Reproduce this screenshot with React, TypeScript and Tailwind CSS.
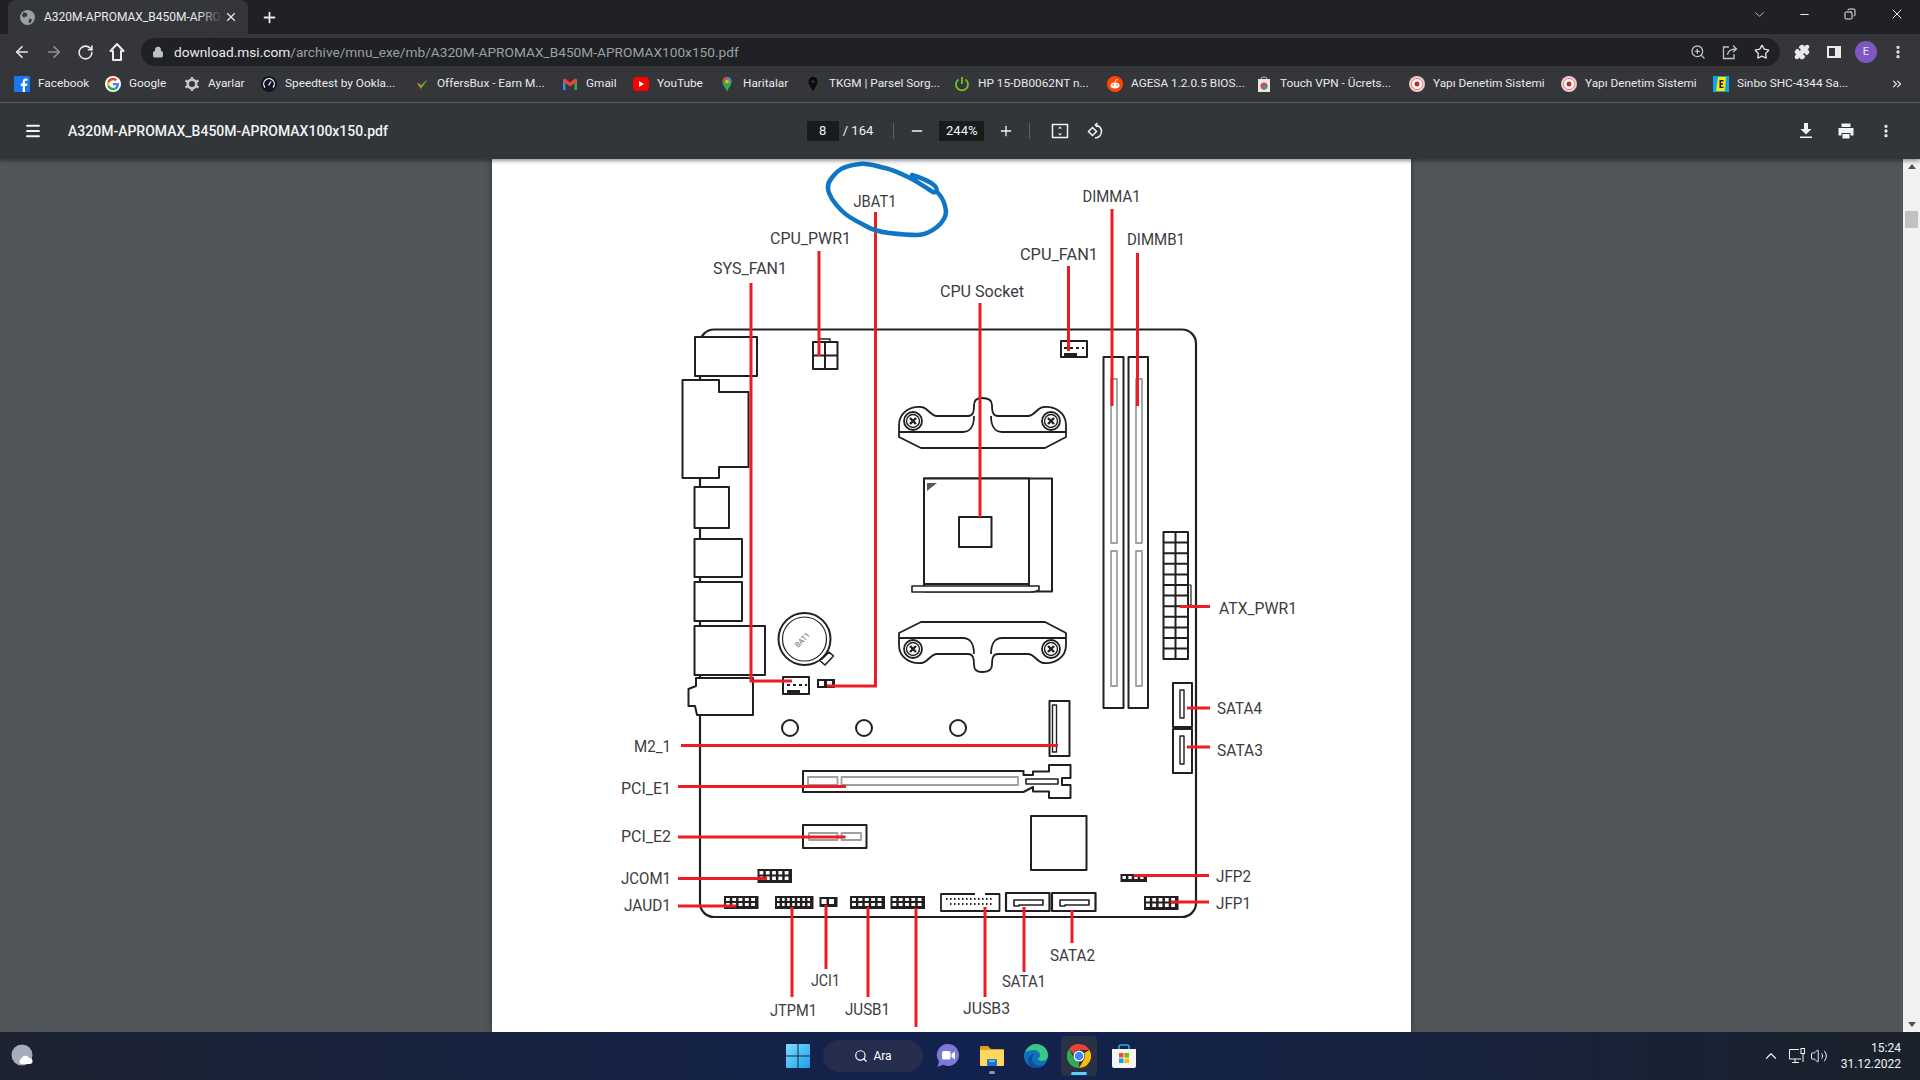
import React from "react";
import {
  ArrowLeft, ArrowRight, RotateCw, Lock, ZoomIn, Star, Puzzle, MoreVertical,
  Menu, Minus, Plus, X, ChevronDown, ChevronUp, ChevronsRight, Search, Copy, Volume2,
} from "lucide-react";

const INK = "#231f20";
const RED = "#ed1c24";

// labels: text, left x, baseline y, width
const LABELS: [string, number, number, number][] = [
  ["JBAT1", 853.5, 207, 43],
  ["DIMMA1", 1082.5, 202, 58],
  ["DIMMB1", 1127, 245, 58],
  ["CPU_PWR1", 770, 244, 81],
  ["SYS_FAN1", 713, 274, 74],
  ["CPU_FAN1", 1020, 260, 78],
  ["CPU Socket", 940, 297, 84],
  ["ATX_PWR1", 1219, 614, 78],
  ["SATA4", 1217, 714, 45],
  ["SATA3", 1217, 755.5, 46],
  ["M2_1", 634, 751.5, 37],
  ["PCI_E1", 621, 794, 50],
  ["PCI_E2", 621, 842, 50],
  ["JCOM1", 621, 884, 50],
  ["JAUD1", 624, 911, 47],
  ["JFP2", 1216, 881.5, 35],
  ["JFP1", 1216, 909, 35],
  ["JTPM1", 770, 1016, 47],
  ["JCI1", 811, 986, 29],
  ["JUSB1", 845, 1015, 45],
  ["JUSB3", 963, 1014, 47],
  ["SATA1", 1002, 987, 44],
  ["SATA2", 1050, 961, 45],
];

// red leader lines
const LEADERS = [
  "M875.5 212V686H827",
  "M751 283V681H792",
  "M819 251V356",
  "M980 303V517",
  "M1068.5 266V351",
  "M1112 209V406",
  "M1137.5 253V406",
  "M1180 606.5H1210",
  "M1187 708H1210",
  "M1187 747H1210",
  "M681 745.500H1058",
  "M678 786.500H846",
  "M678 837H845.500",
  "M678 878.500H767",
  "M678 906H736",
  "M1133.500 875.500H1209",
  "M1170.500 902H1209",
  "M792 907V997",
  "M826 905V969",
  "M868 907V997",
  "M916 908V1027",
  "M985 907V997",
  "M1024 907V972",
  "M1072 910V943",
];

const Pins = ({ x, y, w, h, cols, rows }: { x: number; y: number; w: number; h: number; cols: number; rows: number }) => (
  <g>
    <rect x={x} y={y} width={w} height={h} fill={INK} />
    {Array.from({ length: cols * rows }).map((_, i) => {
      const c = i % cols;
      const r = Math.floor(i / cols);
      return (
        <rect
          key={i}
          x={x + 2 + (c * (w - 3)) / cols}
          y={y + 2 + (r * (h - 3)) / rows}
          width={(w - 3) / cols - 2.5}
          height={(h - 3) / rows - 2}
          fill="#fff"
        />
      );
    })}
  </g>
);

const Bracket = () => (
  <g fill="#fff" stroke={INK} strokeWidth="1.8" strokeLinejoin="round">
    <path d="M899 437V425C899 412 911 406 921 407C928 407 930 416 937 416H968C973 416 974 412 974 405C974 400 977 398 982 398C988 398 992 400 992 405C992 412 993 416 998 416H1028C1035 416 1037 407 1044 407C1054 406 1066 412 1066 425V437L1045 448H921Z" />
    <path d="M899 432H963C970 432 974 426 974 416M1066 432H1002C995 432 991 426 991 416" fill="none" />
    {[913, 1051].map((cx) => (
      <g key={cx}>
        <circle cx={cx} cy={421} r="9" />
        <circle cx={cx} cy={421} r="6.500" strokeWidth="1.400" />
        <path d={`M${cx - 3} ${418}L${cx + 3} ${424}M${cx + 3} ${418}L${cx - 3} ${424}`} strokeWidth="2.400" />
      </g>
    ))}
  </g>
);

const Board = () => (
  <svg viewBox="492 159 919 873" className="block w-full h-full">
    <g fill="#fff" stroke={INK} strokeWidth="2" strokeLinejoin="round">
      <rect x="700" y="329.500" width="496" height="587.500" rx="14" strokeWidth="2.200" />
      {/* back panel */}
      <rect x="695" y="337" width="62" height="39" />
      <path d="M682.500 380H719V392H748.500V467H719V478H682.500Z" />
      <rect x="694.500" y="487" width="34.500" height="41" />
      <rect x="694.500" y="539" width="47.500" height="38" />
      <rect x="694.500" y="582" width="47.500" height="39" />
      <rect x="694.500" y="626" width="70.500" height="49" />
      <path d="M696 678H753V715H697L695 706H688.500V689L696 686Z" />
      {/* cpu power */}
      <path d="M819 342V339H830V342" fill="none" strokeWidth="1.400" />
      <rect x="813" y="342" width="24.500" height="27" />
      <path d="M825 342V369M813 355.500H837.500" fill="none" />
      {/* cpu fan */}
      <rect x="1061" y="341" width="26" height="16" />
      <rect x="1064" y="353" width="13" height="3" fill={INK} stroke="none" />
      <path d="M1064 348H1084" stroke={INK} strokeDasharray="3 3" fill="none" />
      {/* dimm */}
      <rect x="1103.500" y="357" width="20" height="351" />
      <rect x="1128.500" y="357" width="19.500" height="351" />
      <g stroke="#9d9fa2" fill="none" strokeWidth="1.800">
        <rect x="1111" y="379" width="6" height="164" />
        <rect x="1111" y="551" width="6" height="135" />
        <rect x="1136" y="379" width="6" height="164" />
        <rect x="1136" y="551" width="6" height="135" />
      </g>
      {/* socket */}
      <rect x="924" y="478.500" width="128" height="113" />
      <path d="M1029 478.500V586" fill="none" />
      <path d="M924 478.500H1029V584H924Z" />
      <path d="M912 586H1039V590Q1036 592 1030 592H912Z" strokeWidth="1.600" />
      <rect x="959" y="517" width="32.500" height="30" />
      <path d="M927 483H937L927 491Z" fill="#58595b" stroke="none" />
      <Bracket />
      <g transform="matrix(1 0 0 -1 0 1070)">
        <Bracket />
      </g>
      {/* battery */}
      <path d="M822 659L829 652L833.500 656L825 665L819 660Z" strokeWidth="1.600" />
      <circle cx="804.500" cy="639" r="26" />
      <circle cx="804.500" cy="639" r="22" strokeWidth="1.200" />
      {/* sys fan, jbat */}
      <rect x="783" y="677" width="26" height="17" />
      <rect x="787" y="690" width="13" height="3" fill={INK} stroke="none" />
      <path d="M787 685H807" strokeDasharray="3 3" fill="none" />
      <rect x="817" y="679" width="18" height="9" fill={INK} stroke="none" />
      <rect x="819" y="681" width="5" height="5" stroke="none" />
      <rect x="827" y="681" width="5" height="5" stroke="none" />
      {/* holes */}
      <circle cx="790" cy="728" r="8" />
      <circle cx="864" cy="728" r="8" />
      <circle cx="958" cy="728" r="8" />
      {/* m2 */}
      <rect x="1049.500" y="701" width="20" height="55" />
      <rect x="1052.500" y="705" width="4" height="47" strokeWidth="1.400" />
      {/* pci_e1 */}
      <path d="M803 771H1023.500V775H1033V771.500H1049V765H1070.500V778H1062V785H1070.500V798H1049V791.500H1033V787L1023.500 792H803Z" />
      <rect x="1026" y="779" width="32" height="5" strokeWidth="1.600" />
      <g stroke="#9d9fa2" strokeWidth="1.800" fill="none">
        <rect x="808" y="777" width="29.500" height="8" />
        <rect x="841.500" y="777" width="176.500" height="8" />
      </g>
      {/* pci_e2 */}
      <rect x="803" y="825" width="63.500" height="23" />
      <g stroke="#9d9fa2" strokeWidth="1.800" fill="none">
        <rect x="809" y="833" width="28.500" height="7" />
        <rect x="841.500" y="833" width="19.500" height="7" />
      </g>
      {/* chip */}
      <rect x="1031" y="816" width="55.500" height="54" />
      {/* jusb3 */}
      <path d="M975 894H941V911H999.500V894H985" strokeWidth="1.800" />
      <path d="M946 899H994M950 904H994" stroke={INK} strokeDasharray="1.500 2.500" fill="none" strokeWidth="1.800" />
      {/* sata1 / sata2 */}
      <rect x="1006" y="893" width="43.500" height="18" strokeWidth="2.200" />
      <path d="M1014 906V900H1043V905H1019V906Z" strokeWidth="1.600" />
      <rect x="1052" y="893" width="43.500" height="18" strokeWidth="2.200" />
      <path d="M1060 906V900H1089V905H1065V906Z" strokeWidth="1.600" />
      {/* atx */}
      <rect x="1188" y="585" width="3" height="20" strokeWidth="1.200" />
      <rect x="1163.500" y="532" width="24.500" height="127" />
      <path
        d="M1175.500 532V659M1163.500 542.600H1188M1163.500 553.200H1188M1163.500 563.800H1188M1163.500 574.400H1188M1163.500 585H1188M1163.500 595.600H1188M1163.500 606.200H1188M1163.500 616.800H1188M1163.500 627.400H1188M1163.500 638H1188M1163.500 648.600H1188"
        fill="none"
      />
      {/* sata4 / sata3 */}
      <rect x="1173" y="683" width="19" height="44" />
      <path d="M1180 690H1184V718H1180Z" strokeWidth="1.400" />
      <rect x="1173" y="729" width="19" height="44" />
      <path d="M1180 736H1184V764H1180Z" strokeWidth="1.400" />
    </g>
    <Pins x={757.500} y={869} w={34.500} h={14} cols={5} rows={2} />
    <Pins x={724} y={896} w={34.500} h={13} cols={5} rows={2} />
    <Pins x={775} y={896} w={38.500} h={13} cols={7} rows={2} />
    <Pins x={819.500} y={897} w={18} h={10} cols={2} rows={1} />
    <Pins x={850} y={896} w={35} h={13} cols={5} rows={2} />
    <Pins x={890.500} y={896} w={34.500} h={13} cols={5} rows={2} />
    <Pins x={1120.500} y={874} w={26.500} h={8} cols={4} rows={1} />
    <Pins x={1144} y={896} w={34.500} h={14} cols={5} rows={2} />
    <text x="0" y="0" transform="translate(798 648) rotate(-45)" fontFamily="Roboto, sans-serif" fontSize="7.500" fill="#6d6e71">
      BAT1
    </text>

    <path d={LEADERS.join("")} fill="none" stroke={RED} strokeWidth="3" />

    {/* pen circle over JBAT1 */}
    <path
      d="M912 175C922 178 930 181 935 186C938 190 937 193 933 192C926 188 918 182 910 178C902 174 894 170 885 168C876 166 868 163 860 164C850 165 842 167 837 172C831 178 827 183 828 189C829 197 835 204 842 211C848 217 856 221 864 225C872 230 880 232 889 233C898 234 908 235 917 235C925 235 932 231 937 227C943 222 946 216 946 211C945 204 942 197 938 193"
      fill="none"
      stroke="#0f76c6"
      strokeWidth="4.500"
      strokeLinecap="round"
      strokeLinejoin="round"
    />

    {LABELS.map(([t, x, y, w]) => (
      <text
        key={t}
        x={x}
        y={y}
        textLength={w}
        lengthAdjust="spacingAndGlyphs"
        fontFamily="Roboto, sans-serif"
        fontSize="16.500"
        fill="#3c3c3e"
      >
        {t}
      </text>
    ))}
  </svg>
);

/* ---- favicons ---- */
const Fb = () => (
  <svg width="16" height="16" viewBox="0 0 16 16"><rect width="16" height="16" rx="1" fill="#1877f2" /><path d="M11 16V10h2l.4-2.500H11V6c0-.8.3-1.300 1.300-1.300h1.200V2.500h-1.900C10 2.500 8.700 3.700 8.700 5.800v1.700H6.800V10h1.900v6z" fill="#fff" /></svg>
);
const GoogleIcon = () => (
  <svg width="16" height="16" viewBox="0 0 24 24">
    <circle cx="12" cy="12" r="12" fill="#fff" />
    <path fill="#4285F4" d="M21 12.300c0-.7-.1-1.300-.2-1.900H12v3.600h5.100a4.400 4.400 0 0 1-1.900 2.900v2.400h3C20 17.600 21 15.200 21 12.300z" />
    <path fill="#34A853" d="M12 21.500c2.600 0 4.700-.9 6.200-2.300l-3-2.400c-.8.600-1.900.9-3.200.9-2.500 0-4.600-1.700-5.300-3.900H3.600v2.500a9.500 9.500 0 0 0 8.400 5.200z" />
    <path fill="#FBBC05" d="M6.700 13.800a5.800 5.800 0 0 1 0-3.600V7.700H3.600a9.500 9.500 0 0 0 0 8.600z" />
    <path fill="#EA4335" d="M12 6.300c1.400 0 2.600.5 3.600 1.400l2.700-2.700A9.500 9.500 0 0 0 3.600 7.700l3.100 2.500c.7-2.200 2.800-3.900 5.300-3.900z" />
  </svg>
);
const Gear = () => (
  <svg width="16" height="16" viewBox="0 0 16 16"><circle cx="8" cy="8" r="4.300" fill="none" stroke="#c4c7c5" strokeWidth="2.600" /><path d="M8 1v3M8 12v3M1.500 4.500l2.600 1.500M11.900 10l2.600 1.500M1.500 11.500L4.100 10M11.900 6l2.600-1.500" stroke="#c4c7c5" strokeWidth="2.400" /></svg>
);
const Speed = () => (
  <svg width="16" height="16" viewBox="0 0 16 16"><circle cx="8" cy="8" r="8" fill="#141526" /><path d="M4 11.500a5.300 5.300 0 1 1 8 0M7.500 9.500L10 5.500" fill="none" stroke="#fff" strokeWidth="1.200" /></svg>
);
const Offers = () => (
  <svg width="16" height="16" viewBox="0 0 16 16"><path d="M14 4a7 7 0 1 0 1 5" fill="none" stroke="#3a3a32" strokeWidth="1.600" /><path d="M4 7l4 6 7-10-7 6z" fill="#6aa035" /><path d="M4 7l3 1 1 5z" fill="#e8792b" /></svg>
);
const Gmail = () => (
  <svg width="16" height="16" viewBox="0 0 16 16"><path d="M1 14V3.500L3.500 5v9z" fill="#4285f4" /><path d="M15 14V3.500L12.500 5v9z" fill="#34a853" /><path d="M1 3.500l2-1 5 4 5-4 2 1v2L8 10.500 1 5.500z" fill="#ea4335" /></svg>
);
const Yt = () => (
  <svg width="16" height="16" viewBox="0 0 16 16"><rect y="1" width="16" height="14" rx="4" fill="#f00" /><path d="M6 5l5 3-5 3z" fill="#fff" /></svg>
);
const Maps = () => (
  <svg width="16" height="16" viewBox="0 0 16 16"><path d="M8 16C7 12 3.500 10 3.500 5.500a4.500 4.500 0 0 1 9 0C12.500 10 9 12 8 16z" fill="#34a853" /><path d="M3.500 5.500a4.500 4.500 0 0 1 4.500-4.500v3z" fill="#ea4335" /><path d="M8 1a4.500 4.500 0 0 1 4.500 4.500H9z" fill="#4285f4" /><circle cx="8" cy="5.500" r="1.800" fill="#fbbc05" /></svg>
);
const Pin = () => (
  <svg width="16" height="16" viewBox="0 0 16 16"><path d="M8 16C7 12 3.500 9.500 3.500 5.500a4.500 4.500 0 0 1 9 0C12.500 9.500 9 12 8 16z" fill="#0b0b0b" /><circle cx="8" cy="5.500" r="1.600" fill="#35363a" /></svg>
);
const Hp = () => (
  <svg width="16" height="16" viewBox="0 0 16 16"><path d="M4.500 3.500a6 6 0 1 0 7 0" fill="none" stroke="#6fbf2c" strokeWidth="1.800" /><path d="M8 1v7" stroke="#6fbf2c" strokeWidth="1.800" /></svg>
);
const Reddit = () => (
  <svg width="16" height="16" viewBox="0 0 16 16"><circle cx="8" cy="8" r="8" fill="#ff4500" /><ellipse cx="8" cy="9.500" rx="4.500" ry="3" fill="#fff" /><circle cx="6.200" cy="9" r=".8" fill="#ff4500" /><circle cx="9.800" cy="9" r=".8" fill="#ff4500" /><path d="M8 6.500L9 3.500l2 .5" fill="none" stroke="#fff" strokeWidth=".8" /></svg>
);
const StoreFav = () => (
  <svg width="16" height="16" viewBox="0 0 16 16"><rect x="2" y="3" width="12" height="13" fill="#e8e8e8" /><path d="M5 3a3 2 0 0 1 6 0" fill="none" stroke="#bbb" /><circle cx="8" cy="10" r="3.500" fill="#ea4335" /><path d="M8 10l3.500 0a3.500 3.500 0 0 1-5.500 3z" fill="#34a853" /><circle cx="8" cy="10" r="1.400" fill="#4285f4" /></svg>
);
const Seal = () => (
  <svg width="16" height="16" viewBox="0 0 16 16"><circle cx="8" cy="8" r="8" fill="#f0c8c8" /><circle cx="8" cy="8" r="5.500" fill="#fff" stroke="#d88" /><circle cx="8" cy="8" r="2.500" fill="#c8232c" /></svg>
);
const Sinbo = () => (
  <svg width="16" height="16" viewBox="0 0 16 16"><rect width="16" height="16" fill="#09a7e8" /><path d="M5 1h8l-1 14H3z" fill="#ffe600" /><path d="M6.500 4h4v1.500H8v1.800h2v1.500H8v1.900h2.500V12h-4z" fill="#1a1a1a" /></svg>
);

const BOOKMARKS: [string, React.ReactNode, string][] = [
  ["Facebook", <Fb />, "w-[91px]"],
  ["Google", <GoogleIcon />, "w-[79px]"],
  ["Ayarlar", <Gear />, "w-[77px]"],
  ["Speedtest by Ookla...", <Speed />, "w-[152px]"],
  ["OffersBux - Earn M...", <Offers />, "w-[149px]"],
  ["Gmail", <Gmail />, "w-[71px]"],
  ["YouTube", <Yt />, "w-[86px]"],
  ["Haritalar", <Maps />, "w-[86px]"],
  ["TKGM | Parsel Sorg...", <Pin />, "w-[149px]"],
  ["HP 15-DB0062NT n...", <Hp />, "w-[153px]"],
  ["AGESA 1.2.0.5 BIOS...", <Reddit />, "w-[149px]"],
  ["Touch VPN - Ücrets...", <StoreFav />, "w-[153px]"],
  ["Yapı Denetim Sistemi", <Seal />, "w-[152px]"],
  ["Yapı Denetim Sistemi", <Seal />, "w-[152px]"],
  ["Sinbo SHC-4344 Sa...", <Sinbo />, "w-[150px]"],
];

/* ---- taskbar icons ---- */
const WinLogo = () => (
  <svg width="24" height="24" viewBox="0 0 24 24">
    <defs>
      <linearGradient id="win" x1="0" y1="0" x2="1" y2="1"><stop offset="0" stopColor="#7fdcff" /><stop offset="1" stopColor="#18a0ee" /></linearGradient>
    </defs>
    <path fill="url(#win)" d="M0 1a1 1 0 0 1 1-1h10.500v11.500H0zM12.500 0H23a1 1 0 0 1 1 1v10.500H12.500zM0 12.500h11.500V24H1a1 1 0 0 1-1-1zM12.500 12.500H24V23a1 1 0 0 1-1 1H12.500z" />
  </svg>
);
const ChatIcon = () => (
  <svg width="24" height="26" viewBox="0 0 24 26">
    <path d="M12 1a11 11 0 1 1-5 20.800L1.500 24 3 18.500A11 11 0 0 1 12 1z" fill="#7b78d8" />
    <rect x="6" y="8" width="8.500" height="8.500" rx="1.500" fill="#fff" />
    <path d="M15.500 11l3.500-2.500v8L15.500 14z" fill="#fff" />
  </svg>
);
const FolderIcon = () => (
  <svg width="24" height="22" viewBox="0 0 24 22">
    <path d="M0 2a1 1 0 0 1 1-1h7l3 3h12a1 1 0 0 1 1 1v3H0z" fill="#d9a21f" />
    <path d="M0 5h24v15a1 1 0 0 1-1 1H1a1 1 0 0 1-1-1z" fill="#ffd75e" />
    <rect x="7" y="14" width="10" height="7" rx="1" fill="#1b78c9" />
    <rect x="9" y="15" width="6" height="2" fill="#5bb4ee" />
  </svg>
);
const EdgeIcon = () => (
  <svg width="24" height="24" viewBox="0 0 24 24">
    <circle cx="12" cy="12" r="12" fill="#1170b8" />
    <path d="M1 9C3 3 8 0 12 0c7 0 12 5 12 11 0 4-3 6-6 6-2 0-4-1-4-2 0-1 2-1 2-4 0-3-3-5-6-5-4 0-8 1-9 3z" fill="#3bc78a" />
    <path d="M14 24c-5 1-10-2-10-8 0-3 3-6 7-6-2 1-3 3-3 5 0 5 5 8 11 6-1 1-3 3-5 3z" fill="#0d4f9a" />
  </svg>
);
const ChromeIcon = () => (
  <svg width="24" height="24" viewBox="0 0 24 24">
    <path d="M12 0a12 12 0 0 1 10.400 6H12a6 6 0 0 0-5.700 4.100L2.100 5A12 12 0 0 1 12 0z" fill="#ea4335" />
    <path d="M22.400 6A12 12 0 0 1 12 24l5.200-9A6 6 0 0 0 17.200 9z" fill="#fbbc05" />
    <path d="M12 24A12 12 0 0 1 2.100 5l5.100 9.500A6 6 0 0 0 12 18z" fill="#34a853" />
    <circle cx="12" cy="12" r="5.500" fill="#fff" />
    <circle cx="12" cy="12" r="4.300" fill="#4285f4" />
  </svg>
);
const StoreIcon = () => (
  <svg width="24" height="24" viewBox="0 0 24 24">
    <path d="M7 6V3a2 2 0 0 1 2-2h6a2 2 0 0 1 2 2v3" fill="none" stroke="#29a8e8" strokeWidth="1.600" />
    <path d="M0 5h24v17a2 2 0 0 1-2 2H2a2 2 0 0 1-2-2z" fill="#f5f5f5" />
    <rect x="7" y="9" width="4.500" height="4.500" fill="#f25022" />
    <rect x="12.500" y="9" width="4.500" height="4.500" fill="#7fba00" />
    <rect x="7" y="14.500" width="4.500" height="4.500" fill="#00a4ef" />
    <rect x="12.500" y="14.500" width="4.500" height="4.500" fill="#ffb900" />
  </svg>
);

/* ---- toolbar icons ---- */
const HomeIcon = () => (
  <svg width="18" height="20" viewBox="0 0 18 20" fill="none" stroke="#e8eaed" strokeWidth="2">
    <path d="M9 2L2.500 9H5v9h8V9h2.500Z" strokeLinejoin="round" />
  </svg>
);
const ShareIcon = () => (
  <svg width="16" height="16" viewBox="0 0 16 16" fill="none" stroke="#bdc1c6" strokeWidth="1.300">
    <path d="M7 3H1.500v11.500h10.500V10" />
    <path d="M5.500 11C6 7 8.500 5 14 5M11 1.500L14.500 5 11 8" />
  </svg>
);
const PanelIcon = () => (
  <svg width="16" height="16" viewBox="0 0 16 16"><rect x="1" y="2" width="14" height="12" fill="#e8eaed" /><rect x="3" y="4" width="6" height="8" fill="#35363a" /></svg>
);
const FitIcon = () => (
  <svg width="18" height="18" viewBox="0 0 18 18" fill="none" stroke="#f1f3f4">
    <rect x="1.500" y="2.500" width="15" height="13" strokeWidth="1.500" />
    <path d="M9 4.500l-2 2h4zM9 13.500l-2-2h4z" fill="#f1f3f4" stroke="none" />
  </svg>
);
const RotateIcon = () => (
  <svg width="18" height="18" viewBox="0 0 18 18" fill="none" stroke="#f1f3f4" strokeWidth="1.500">
    <path d="M1.500 9.500L5.500 5.500 9.500 9.500 5.500 13.500Z" />
    <path d="M8 3a6.500 6.500 0 1 1 0 13M8 3l2.500-2M8 3l2.500 2" />
  </svg>
);
const DownloadIcon = () => (
  <svg width="16" height="18" viewBox="0 0 16 18" fill="#f1f3f4">
    <path d="M6 1h4v6h3.500L8 12.500 2.500 7H6zM2 14.500h12V16H2z" />
  </svg>
);
const PrintIcon = () => (
  <svg width="18" height="18" viewBox="0 0 18 18" fill="#f1f3f4">
    <path d="M4.500 1.500h9V5h-9zM1.500 6h15v7.500h-3V11h-9v2.500h-3zM5.500 12h7v4.500h-7z" />
  </svg>
);

export default function App() {
  return (
    <div className="h-screen w-full flex flex-col overflow-hidden bg-[#525659] font-['Roboto',sans-serif]">
      {/* tabs */}
      <div className="h-[34px] bg-[#202124] flex items-end pl-2 shrink-0 relative">
        <div className="w-[240px] h-[34px] bg-[#35363a] rounded-t-lg flex items-center pl-[12px] pr-[10px] relative">
          <svg width="15" height="15" viewBox="0 0 16 16" className="shrink-0 mr-[9px]">
            <circle cx="8" cy="8" r="8" fill="#9aa0a6" />
            <path d="M4 2l4 2-1 3-3 1-2-2zM10 9l3 1-2 4-2-1z" fill="#35363a" />
          </svg>
          <span className="text-[12px] text-[#e8eaed] whitespace-nowrap">A320M-APROMAX_B450M-APRO</span>
          <span className="absolute left-[190px] top-0 w-[24px] h-full bg-gradient-to-r from-transparent to-[#35363a]" />
          <X size={14} color="#e8eaed" className="absolute right-[10px] top-[10px]" />
        </div>
        <Plus size={17} color="#e8eaed" strokeWidth={2.500} className="ml-[13px] mb-[8px]" />
        <div className="ml-auto flex items-center h-[28px] self-start">
          <ChevronDown size={15} color="#bdc1c6" strokeWidth={1.500} className="mr-[31px]" />
          <Minus size={13} color="#e8eaed" className="mr-[33px]" />
          <Copy size={12} color="#e8eaed" className="mr-[33px] -scale-x-100" />
          <X size={16} color="#e8eaed" strokeWidth={1.500} className="mr-[15px]" />
        </div>
      </div>

      {/* nav bar */}
      <div className="h-[32px] bg-[#35363a] flex items-end shrink-0">
        <div className="flex items-center h-[28px] w-[141px] pl-[13px] gap-[14px]">
          <ArrowLeft size={18} color="#e8eaed" strokeWidth={2.200} />
          <ArrowRight size={18} color="#8e9195" strokeWidth={2.200} />
          <RotateCw size={17} color="#e8eaed" strokeWidth={2.200} />
          <HomeIcon />
        </div>
        <div className="w-[1639px] h-[28px] bg-[#202124] rounded-full flex items-center pl-[11px] pr-[10px]">
          <Lock size={12} color="#bdc1c6" fill="#bdc1c6" className="mr-[10px]" />
          <span className="text-[13.700px] text-[#9aa0a6] whitespace-nowrap">
            <span className="text-[#e8eaed]">download.msi.com</span>/archive/mnu_exe/mb/A320M-APROMAX_B450M-APROMAX100x150.pdf
          </span>
          <div className="ml-auto flex items-center gap-[16px]">
            <ZoomIn size={16} color="#bdc1c6" />
            <ShareIcon />
            <Star size={16} color="#dfe1e5" />
          </div>
        </div>
        <div className="flex-1 h-[28px] flex items-center pl-[14px]">
          <Puzzle size={16} color="#e8eaed" fill="#e8eaed" />
          <span className="ml-[16px] flex"><PanelIcon /></span>
          <div className="ml-[13px] w-[22px] h-[22px] rounded-full bg-[#7e57c2] text-[#e8eaed] text-[11px] flex items-center justify-center">E</div>
          <MoreVertical size={16} color="#e8eaed" strokeWidth={3} className="ml-[13px]" />
        </div>
      </div>

      {/* bookmarks */}
      <div className="h-[37px] bg-[#35363a] border-b border-[#5f6368] flex items-center pl-[14px] shrink-0">
        {BOOKMARKS.map(([name, icon, w], i) => (
          <div key={i} className={`flex items-center gap-[8px] shrink-0 ${w}`}>
            <span className="shrink-0 flex">{icon}</span>
            <span className="text-[11.800px] text-[#e8eaed] whitespace-nowrap">{name}</span>
          </div>
        ))}
        <ChevronsRight size={14} color="#e8eaed" className="ml-auto mr-[16px]" />
      </div>

      {/* pdf toolbar */}
      <div className="h-[56px] bg-[#323639] grid grid-cols-[1fr_auto_1fr] items-center shrink-0 shadow-[0_2px_4px_rgba(0,0,0,0.4)] relative z-10">
        <div className="flex items-center pl-[24px] gap-[26px]">
          <Menu size={18} color="#f1f3f4" strokeWidth={2.500} />
          <span className="text-[14px] font-medium text-[#f1f3f4] whitespace-nowrap">A320M-APROMAX_B450M-APROMAX100x150.pdf</span>
        </div>
        <div className="flex items-center text-[#f1f3f4] text-[13px] pr-[8px]">
          <span className="w-[32px] h-[20px] bg-[#191b1c] flex items-center justify-center">8</span>
          <span className="ml-[4px] mr-[20px]">/ 164</span>
          <span className="w-px h-[16px] bg-[#5f6368]" />
          <Minus size={16} className="ml-[15px] mr-[14px]" />
          <span className="w-[45px] h-[20px] bg-[#191b1c] flex items-center justify-center">244%</span>
          <Plus size={16} className="ml-[14px] mr-[15px]" />
          <span className="w-px h-[16px] bg-[#5f6368]" />
          <span className="ml-[21px] mr-[18px] flex"><FitIcon /></span>
          <RotateIcon />
        </div>
        <div className="flex items-center justify-end gap-[23px] pr-[26px] text-[#f1f3f4]">
          <DownloadIcon />
          <PrintIcon />
          <MoreVertical size={16} strokeWidth={3} />
        </div>
      </div>

      {/* viewer */}
      <div className="flex-1 flex min-h-0">
        <div className="flex-1 overflow-hidden flex justify-center">
          <div className="w-[919px] h-[873px] bg-white shrink-0 shadow-[0_0_6px_rgba(0,0,0,0.4)]">
            <Board />
          </div>
        </div>
        <div className="w-[17px] bg-[#f1f1f1] flex flex-col items-center justify-between py-[5px] relative">
          <span className="w-0 h-0 border-x-[4px] border-x-transparent border-b-[5px] border-b-[#505050]" />
          <span className="absolute top-[52px] left-[2px] w-[13px] h-[17px] bg-[#c1c1c1]" />
          <span className="w-0 h-0 border-x-[4px] border-x-transparent border-t-[5px] border-t-[#505050]" />
        </div>
      </div>

      {/* taskbar */}
      <div className="h-[48px] shrink-0 grid grid-cols-[1fr_auto_1fr] items-center bg-gradient-to-r from-[#1c2230] via-[#12224e] to-[#1b212b]">
        <div className="pl-[11px]">
          <svg width="24" height="24" viewBox="0 0 24 24">
            <circle cx="11" cy="11" r="10.500" fill="#a5adb8" />
            <path d="M10 20a3 3 0 0 1 .5-5.500 4 4 0 0 1 7.500-.5 3 3 0 0 1 1 6z" fill="#fff" />
          </svg>
        </div>
        <div className="flex items-center pl-[2px]">
          <WinLogo />
          <div className="w-[100px] h-[32px] rounded-full bg-[#242e4c] flex items-center justify-center gap-[5px] ml-[13px] mr-[13px]">
            <Search size={14} color="#fff" />
            <span className="text-[12px] text-white">Ara</span>
          </div>
          <ChatIcon />
          <div className="ml-[20px] relative flex">
            <FolderIcon />
            <span className="absolute -bottom-[7px] left-[9px] w-[6px] h-[3px] rounded-full bg-[#8f96a3]" />
          </div>
          <div className="ml-[20px] flex"><EdgeIcon /></div>
          <div className="ml-[13px] w-[36px] h-[40px] rounded-[4px] bg-[#2a3145] flex items-center justify-center relative">
            <ChromeIcon />
            <span className="absolute bottom-[1px] left-[10px] w-[16px] h-[3px] rounded-full bg-[#60cdff]" />
          </div>
          <div className="ml-[15px] flex"><StoreIcon /></div>
        </div>
        <div className="flex items-center justify-end pr-[19px] text-[#f3f4f6]">
          <ChevronUp size={18} strokeWidth={1.500} className="mr-[8px]" />
          <svg width="18" height="18" viewBox="0 0 18 18" fill="none" stroke="#f3f4f6" className="mr-[4px]">
            <path d="M11 2.500H1.500V12H13M7 12v3M4 15.500h7" />
            <rect x="13" y="1.500" width="3.500" height="5" />
            <path d="M15 6.500V15" />
          </svg>
          <Volume2 size={18} strokeWidth={1.300} />
          <div className="ml-[13px] flex flex-col items-end text-[12px] leading-[16px]">
            <span>15:24</span>
            <span>31.12.2022</span>
          </div>
        </div>
      </div>
    </div>
  );
}
